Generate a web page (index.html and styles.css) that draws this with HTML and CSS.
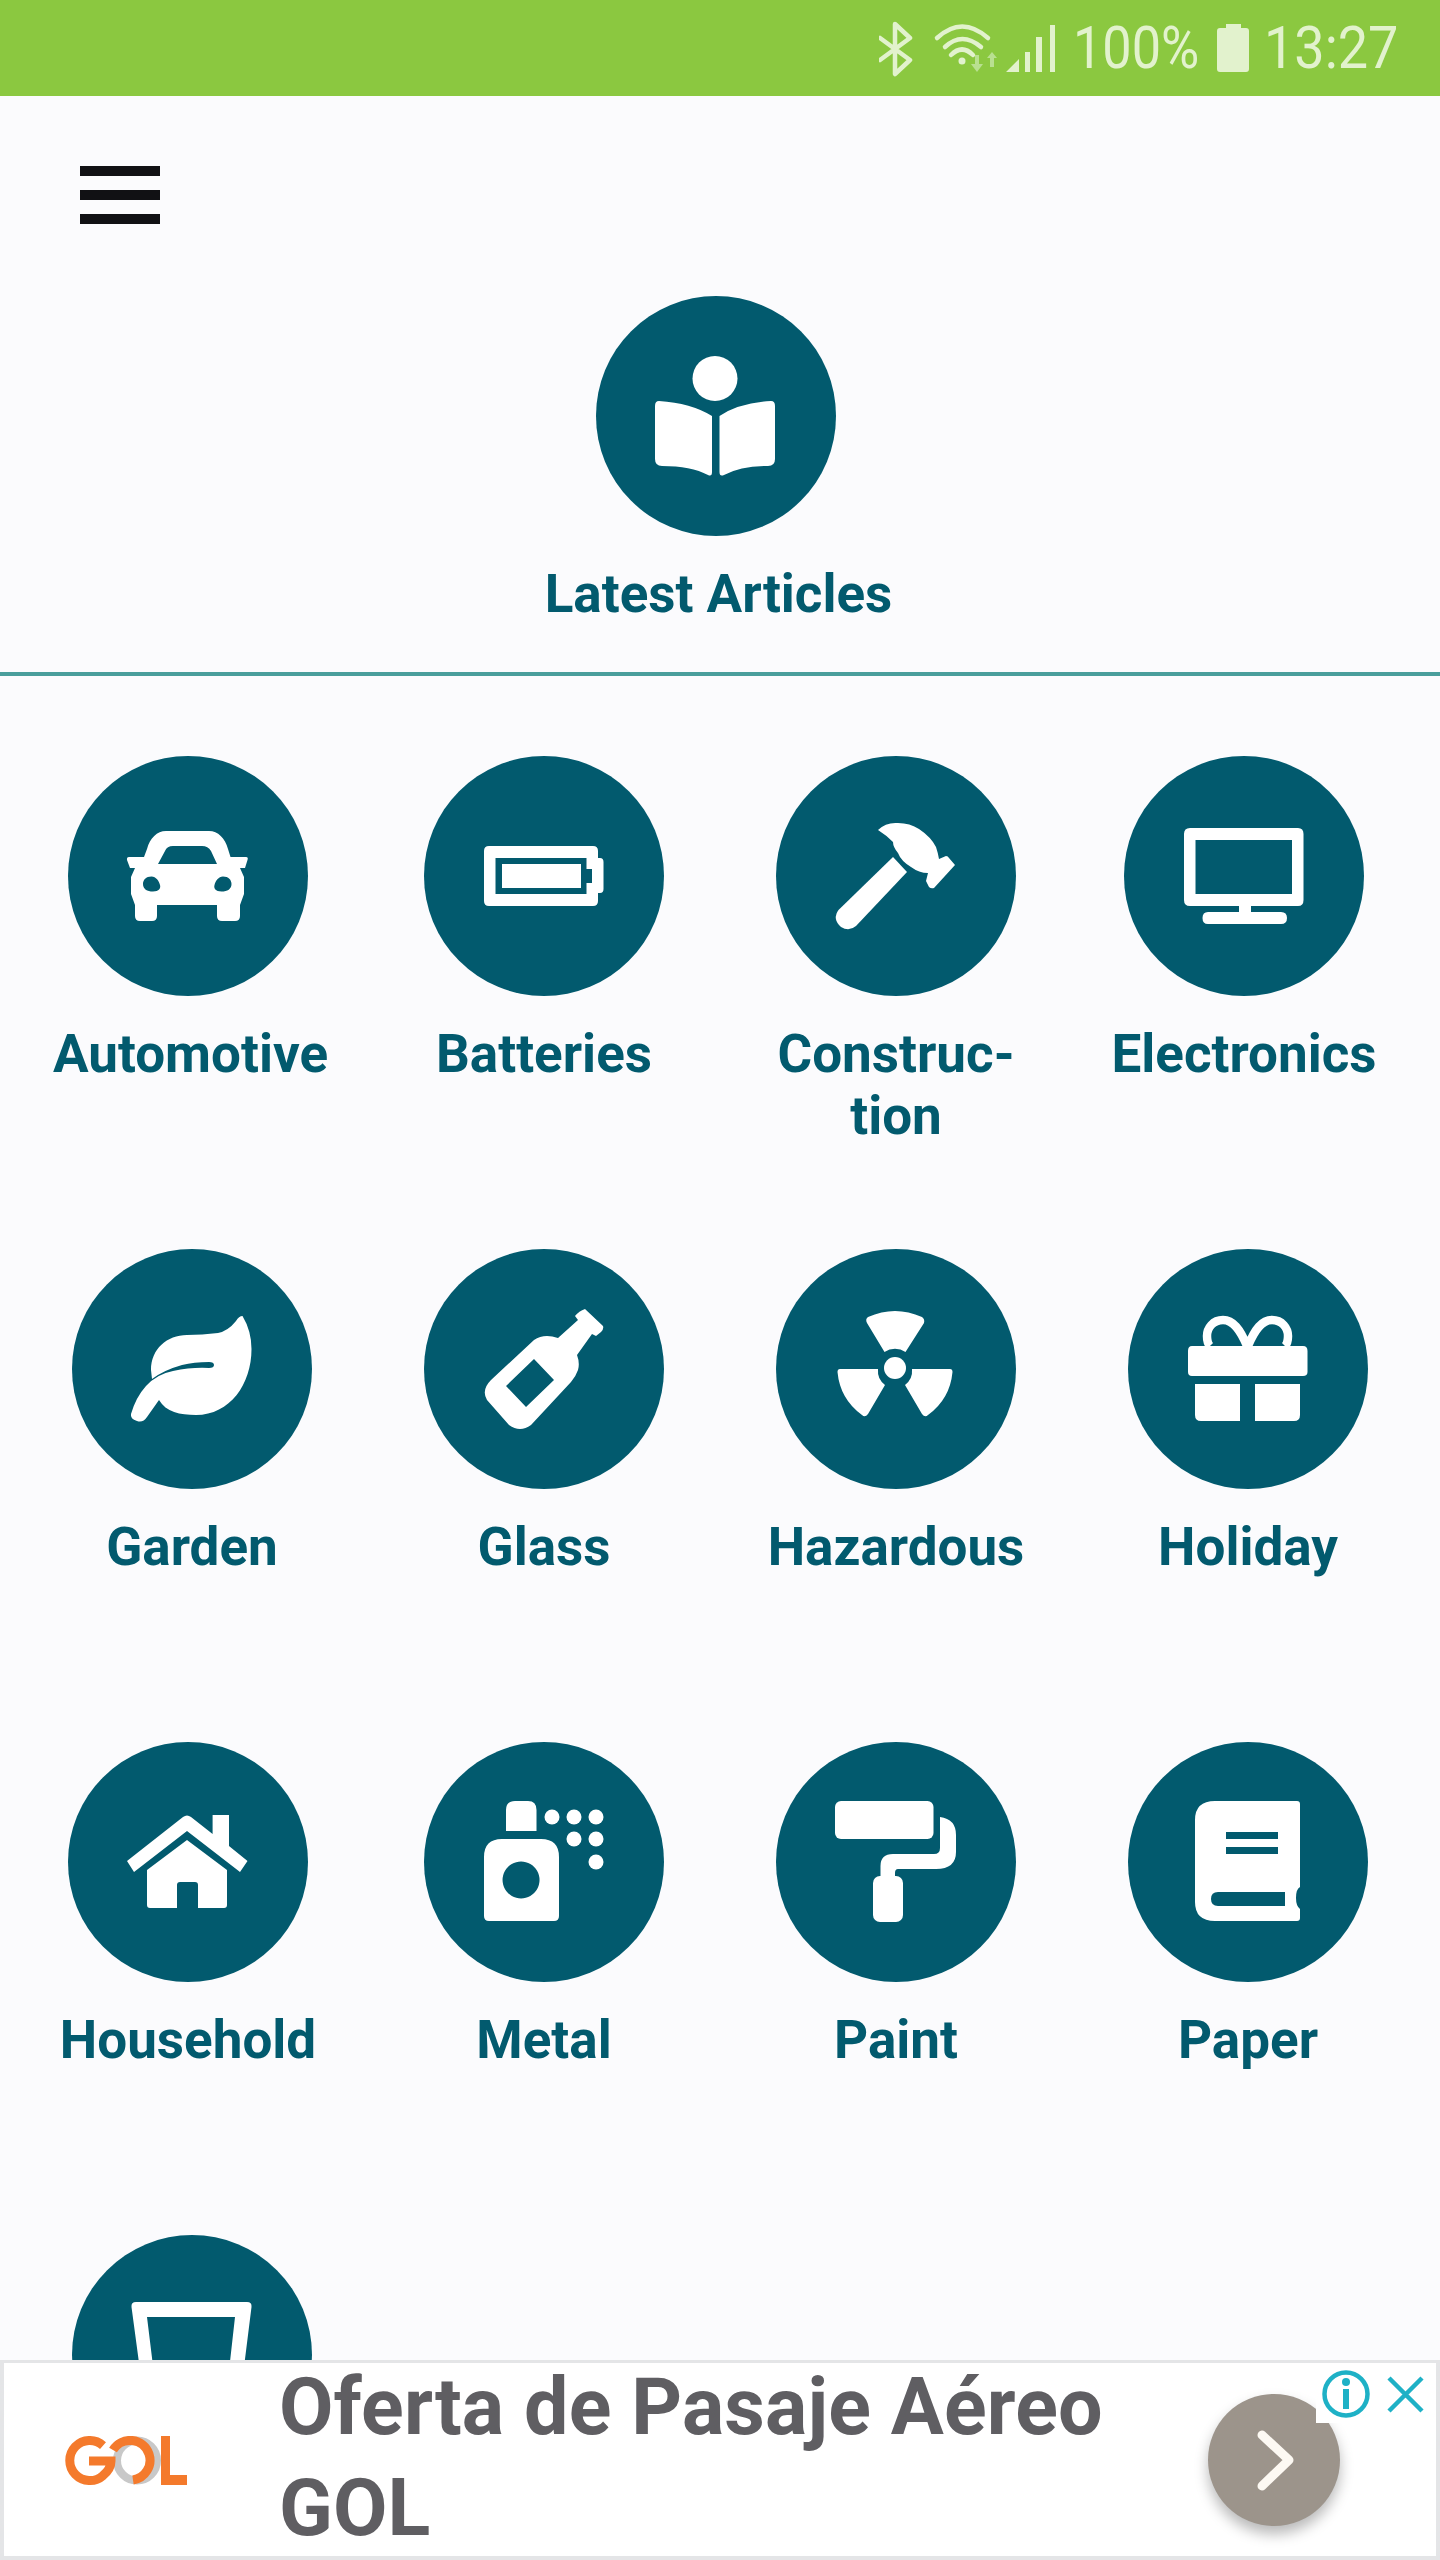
FILE: index.html
```html
<!DOCTYPE html>
<html lang="en">
<head>
<meta charset="utf-8">
<title>Latest Articles</title>
<link rel="stylesheet" href="styles.css">
</head>
<body>
<div class="screen">
  <div class="statusbar">
    <svg class="st-icons" viewBox="0 0 176 96" width="176" height="96">
      <path class="st-line" d="M1 38 L31 60 L16 74 V24 L31 38 L1 60"/>
      <path class="st-line" d="M58 38 Q83 15 109 38"/>
      <path class="st-line" d="M66 47 Q83 31 102 47"/>
      <path class="st-line" d="M72 55 Q83 44 94 55"/>
      <circle class="st-fill" cx="83" cy="61" r="3.5"/>
      <path class="st-dim" d="M96 55 h4 v9 h4 l-6 8 l-6 -8 h4 z M111 67 v-9 h-3 l5 -6 l5 6 h-3 v9 z"/>
      <path class="st-fill" d="M127 72 L140 59 V72 Z M146 52 h5 V72 h-5 Z M157 37 h6 V72 h-6 Z M171 25 h5 V72 h-5 Z"/>
    </svg>
    <span class="st-text st-pct">100%</span>
    <svg class="st-batt" viewBox="0 0 32 48" width="32" height="48"><path class="st-fill" d="M9 0 H24 V4 H29 Q32 4 32 7 V45 Q32 48 29 48 H3 Q0 48 0 45 V7 Q0 4 3 4 H9 Z"/></svg>
    <span class="st-text st-time">13:27</span>
  </div>

  <button class="menu" aria-label="Menu"><span class="menu-bar"></span><span class="menu-bar"></span><span class="menu-bar"></span></button>

  <div class="latest">
    <div class="tile">
      <svg class="disc" viewBox="0 0 240 240"><circle class="disc-bg" cx="120" cy="120" r="120"/>
        <circle class="ic" cx="119" cy="82.500" r="22.500"/>
        <path class="ic" d="M63 105 Q95 107 116 120 V176 Q116 181 112 179 Q95 170 66 170 Q59 170 59 163 V110 Q59 105 63 105 Z M175 105 Q143 107 123.500 120 V176 Q123.500 181 128 179 Q145 170 172 170 Q179 170 179 163 V110 Q179 105 175 105 Z"/>
      </svg>
      <div class="label label-shift">Latest Articles</div>
    </div>
  </div>

  <div class="rule"></div>

  <div class="grid">
    <div class="row row-a">
      <div class="tile">
        <svg class="disc" viewBox="0 0 240 240"><circle class="disc-bg" cx="120" cy="120" r="120"/>
          <path class="ic" fill-rule="evenodd" d="M98 75 H141 C150 75 157 82 160 93 L162.500 101 H178 Q180.500 101 179.500 104 L177 112 H172 L176 121 V138 L172 149 V160 Q172 165 167 165 H154 Q149 165 149 160 V149 H89 V160 Q89 165 84 165 H72 Q67 165 67 160 V149 L63 138 V121 L67 112 H62 L59 104 Q58.500 101 61 101 H76 L79 93 C82 82 89 75 98 75 Z M90 108 H149 L143 95 Q140 90 134 90 H105 Q99 90 97 95 Z M83.500 120.500 C78 120.500 75 124 75 128 C75 133 79 135.500 85 135.500 C91 135.500 93 132 92 129 C91 125 88 120.500 83.500 120.500 Z M155 120.500 C150.500 120.500 147.500 125 146.500 129 C145.500 132 147.500 135.500 153.500 135.500 C159.500 135.500 163.500 133 163.500 128 C163.500 124 160.500 120.500 155 120.500 Z"/>
        </svg>
        <div class="label label-shift">Automotive</div>
      </div>
      <div class="tile">
        <svg class="disc" viewBox="0 0 240 240"><circle class="disc-bg" cx="120" cy="120" r="120"/>
          <path class="ic" fill-rule="evenodd" d="M65 90 H169 Q174 90 174 95 V102 H176 Q179.500 102 179.500 106 V133 Q179.500 137 176 137 H174 V145 Q174 150 169 150 H65 Q60 150 60 145 V95 Q60 90 65 90 Z M71.500 102 V138 H162.500 V127 H168 V113 H162.500 V102 Z"/>
          <rect class="ic" x="78" y="108" width="79" height="24"/>
        </svg>
        <div class="label">Batteries</div>
      </div>
      <div class="tile">
        <svg class="disc" viewBox="0 0 240 240"><circle class="disc-bg" cx="120" cy="120" r="120"/>
          <path class="ic" d="M117 101 L131 116 L80 170 Q73 176 65 171 Q56 163 62.500 154 Z"/>
          <path class="ic" d="M102 74 Q110 66 122 67 Q134 67 143 73 Q155 81 160 91 Q162 97 163 103 L170 100 Q172 100 173 102 L179 109 L158 132 Q155 133 153 131 L150 125 L152 117 Q143 117 135 111 Q125 105 122 97 Q117 91 117 86 Q110 79 102 74 Z"/>
        </svg>
        <div class="label label-wrap">Construc-<br>tion</div>
      </div>
      <div class="tile">
        <svg class="disc" viewBox="0 0 240 240"><circle class="disc-bg" cx="120" cy="120" r="120"/>
          <path class="ic" fill-rule="evenodd" d="M66 72 H174 Q179.500 72 179.500 78 V144 Q179.500 150 174 150 H127 V156 H157 Q163 156 163 162 Q163 168 157 168 H84 Q78.500 168 78.500 162 Q78.500 156 84 156 H115 V150 H66 Q60 150 60 144 V78 Q60 72 66 72 Z M71.500 84 V138 H168 V84 Z"/>
        </svg>
        <div class="label">Electronics</div>
      </div>
    </div>

    <div class="row row-b">
      <div class="tile">
        <svg class="disc" viewBox="0 0 240 240"><circle class="disc-bg" cx="120" cy="120" r="120"/>
          <path class="ic" d="M170.500 67 Q179.500 82 179.500 100 C179.500 135 158 166 124 166 C108 166 94 163 87 151 L75 168 Q71 174 65 172 Q58 170 59 165 Q64 148 74 137 Q85 125 101 122 Q120 118 137 119 Q142 119 142 116 Q142 113 137 113 Q122 113 110 116 Q92 121 80 130 L79 121 C79 100 95 86 115 86 Q130 86 146 84 Q156 82 164 72 Q167 67 170.500 67 Z"/>
        </svg>
        <div class="label">Garden</div>
      </div>
      <div class="tile">
        <svg class="disc" viewBox="0 0 240 240"><circle class="disc-bg" cx="120" cy="120" r="120"/>
          <path class="ic" fill-rule="evenodd" d="M161 60 L179 77 Q180 80 177 83 L172 87 L168 85 L153 106 Q156 114 154 121 Q152 127 147 133 L107 176 Q96 184 85 176 L63 151 Q57 141 67 131 L110 91 Q120 84 134 89 L154 71 L151 67 Q155 62 161 60 Z M110 110 L82 137 L102 158 L130 131 Z"/>
        </svg>
        <div class="label">Glass</div>
      </div>
      <div class="tile">
        <svg class="disc" viewBox="0 0 240 240"><circle class="disc-bg" cx="120" cy="120" r="120"/>
          <path class="ic" d="M91 74 Q89 70 92 68 Q119 56 146 68 Q149 70 148 74 L129.500 103 A19 19 0 0 0 108.500 103 Z"/>
          <path class="ic" d="M64 120 H102 A18 18 0 0 0 109 136 L92 165 Q89 169 86 166 Q64 150 61.500 123 Q61.500 120 64 120 Z"/>
          <path class="ic" d="M174 120 H136 A18 18 0 0 1 129 136 L146 165 Q149 169 152 166 Q174 150 176.500 123 Q176.500 120 174 120 Z"/>
          <circle class="ic" cx="119" cy="119" r="11"/>
        </svg>
        <div class="label">Hazardous</div>
      </div>
      <div class="tile">
        <svg class="disc" viewBox="0 0 240 240"><circle class="disc-bg" cx="120" cy="120" r="120"/>
          <path class="bow" d="M119 97 C112 80 105 71 95 71 C85 71 79 79 79 87 C79 91 80 95 82 97 M120 97 C127 80 134 71 144 71 C154 71 160 79 160 87 C160 91 159 95 157 97"/>
          <path class="ic" d="M64 97 H175 Q179.500 97 179.500 102 V123 Q179.500 127 175 127 H64 Q60 127 60 123 V102 Q60 97 64 97 Z M67 135 H112 V172 H73 Q67 172 67 166 Z M127 135 H172 V166 Q172 172 166 172 H127 Z"/>
        </svg>
        <div class="label">Holiday</div>
      </div>
    </div>

    <div class="row row-c">
      <div class="tile">
        <svg class="disc" viewBox="0 0 240 240"><circle class="disc-bg" cx="120" cy="120" r="120"/>
          <path class="ic" d="M115 75 Q119 72 123 75 L144.600 92 V73 H161 V104 L179.500 119 L172 130 L119 89 L66 130 L59 119 Z"/>
          <path class="ic" d="M119 98 L159 128 V163 Q159 166 156 166 H130 V143 Q130 140 127 140 H112 Q109 140 109 143 V166 H82 Q79 166 79 163 V128 Z"/>
        </svg>
        <div class="label">Household</div>
      </div>
      <div class="tile">
        <svg class="disc" viewBox="0 0 240 240"><circle class="disc-bg" cx="120" cy="120" r="120"/>
          <path class="ic" fill-rule="evenodd" d="M82 68 Q82 59 91 59 H104 Q112.500 59 112.500 68 V89 H82 Z M78 97 H117 Q135 97 135 115 V174 Q135 179 130 179 H65 Q60 179 60 174 V115 Q60 97 78 97 Z M97 119.500 A18.500 18.500 0 1 0 97.100 119.500 Z"/>
          <g class="ic"><circle cx="128" cy="75" r="7.500"/><circle cx="150" cy="75" r="7.500"/><circle cx="172" cy="75" r="7.500"/><circle cx="150" cy="97" r="7.500"/><circle cx="172" cy="97" r="7.500"/><circle cx="172" cy="120" r="7.500"/></g>
        </svg>
        <div class="label">Metal</div>
      </div>
      <div class="tile">
        <svg class="disc" viewBox="0 0 240 240"><circle class="disc-bg" cx="120" cy="120" r="120"/>
          <rect class="ic" x="59" y="59" width="98.500" height="38" rx="6"/>
          <path class="ic" d="M164 75 Q180 77 180 93 V110 Q180 127 160 127 H122 Q119 127 119 131 V136 H104.500 V124 Q104.500 112 117 112 H158 Q164 112 164 106 Z"/>
          <rect class="ic" x="97" y="134" width="30" height="46" rx="7"/>
        </svg>
        <div class="label">Paint</div>
      </div>
      <div class="tile">
        <svg class="disc" viewBox="0 0 240 240"><circle class="disc-bg" cx="120" cy="120" r="120"/>
          <path class="ic" fill-rule="evenodd" d="M87 59 H169 Q172 59 172 62 V145 Q168 147 168 156 Q168 164 172 167 V176 Q172 179 169 179 H87 Q67 179 67 160 V78 Q67 59 87 59 Z M98 90 V97 H150 V90 Z M98 105 V112 H150 V105 Z M90 150 Q83 150 83 157 Q83 164 90 164 H157 V150 Z"/>
        </svg>
        <div class="label">Paper</div>
      </div>
    </div>

    <div class="row row-b">
      <div class="tile">
        <svg class="disc" viewBox="0 0 240 240"><circle class="disc-bg" cx="120" cy="120" r="120"/>
          <path class="ic" fill-rule="evenodd" d="M64 67 H175 Q180 67 179.500 72 L166 180 H74 L59.500 72 Q59 67 64 67 Z M75 82 L87 180 H152 L163 82 Z"/>
        </svg>
      </div>
    </div>
  </div>

  <aside class="ad">
    <svg class="gol" viewBox="0 0 122 49" width="122" height="49">
      <circle class="gol-gray" cx="72" cy="24.500" r="20"/>
      <path class="gol-or" d="M38 9.500 A20 20 0 1 0 38 39.500 Q46 33 46 25 H24"/>
      <path class="gol-or" d="M48 14 A20 20 0 0 1 84 18 A20 20 0 0 1 68 44"/>
      <path class="gol-l" d="M96 0 H105 V39 H122 V49 H96 Z"/>
    </svg>
    <div class="ad-title">Oferta de Pasaje Aéreo<br>GOL</div>
    <div class="ad-next">
      <svg viewBox="0 0 132 132" width="132" height="132"><path class="chev" d="M54 41 L81 66 L54 92"/></svg>
    </div>
    <div class="adchoice">
      <svg viewBox="0 0 120 60" width="120" height="60">
        <circle class="ac-line" cx="30" cy="31" r="21.500"/>
        <circle class="ac-dot" cx="30" cy="19" r="4"/>
        <rect class="ac-dot" x="27" y="26" width="6" height="20"/>
        <path class="ac-line" d="M73 15 L106 48 M106 15 L73 48"/>
      </svg>
    </div>
  </aside>
</div>
</body>
</html>
```
FILE: styles.css
```css
* { box-sizing: border-box; }
html, body { margin: 0; padding: 0; }
body { width: 1440px; height: 2560px; overflow: hidden; background: #fbfbfd; font-family: Roboto, "Liberation Sans", sans-serif; }
.screen { position: relative; width: 1440px; height: 2560px; overflow: hidden; background: #fbfbfd; }

.statusbar { height: 96px; background: #8bc840; display: flex; align-items: center; justify-content: flex-end; padding-right: 44px; color: #e2f2cd; }
.st-icons { flex: none; margin-right: 18px; }
.st-line { fill: none; stroke: #e2f2cd; stroke-width: 4.5; stroke-linecap: round; stroke-linejoin: round; }
.st-fill { fill: #e2f2cd; }
.st-dim { fill: #b9e090; }
.st-text { display: block; font-size: 60px; font-weight: 400; line-height: 96px; white-space: nowrap; transform-origin: left center; }
.st-pct { width: 126px; transform: scaleX(.87); }
.st-time { width: 132px; transform: scaleX(.9); }
.st-batt { flex: none; margin: 0 15px 0 18px; }

.menu { display: flex; flex-direction: column; gap: 14px; width: 80px; margin: 70px 0 0 80px; padding: 0; border: 0; background: none; }
.menu-bar { display: block; height: 10px; background: #111114; }

.latest { display: flex; justify-content: center; margin-top: 72px; padding-right: 8px; }
.rule { height: 4px; margin-top: 47px; background: #4a9e9c; }

.grid { padding-top: 80px; }
.row { display: grid; height: 493px; }
.row-a { grid-template-columns: 376px 336px 368px 328px; }
.row-b { grid-template-columns: 384px 320px 384px 320px; }
.row-c { grid-template-columns: 376px 336px 368px 336px; }

.tile { display: flex; flex-direction: column; align-items: center; }
.disc { display: block; flex: none; width: 240px; height: 240px; }
.disc-bg { fill: #025a6e; }
.ic { fill: #fff; }
.bow { fill: none; stroke: #fff; stroke-width: 8.500; }
.label { margin-top: 27px; font-size: 53px; font-weight: 700; line-height: 62px; color: #025a6e; text-align: center; white-space: nowrap; }
.label-shift { margin-left: 5px; }

.ad { position: absolute; left: 0; right: 0; bottom: 0; height: 200px; display: flex; align-items: flex-start; background: #fff; border: 4px solid #e4e5e7; border-top-width: 3px; }
.gol { flex: none; margin: 73px 0 0 61px; }
.gol-gray { fill: none; stroke: #c8c8c8; stroke-width: 8; }
.gol-or { fill: none; stroke: #f47a2c; stroke-width: 9; }
.gol-l { fill: #f47a2c; }
.ad-title { flex: 1; margin: -6px 0 0 92px; font-size: 79px; font-weight: 700; line-height: 101px; letter-spacing: .15px; color: #5f5e62; white-space: nowrap; }
.ad-next { flex: none; width: 132px; height: 132px; margin: 31px 96px 0 0; border-radius: 50%; background: #9c948b; box-shadow: 0 8px 14px rgba(0,0,0,.28); }
.ad-next svg { display: block; }
.chev { fill: none; stroke: #fdf9f3; stroke-width: 9; stroke-linecap: round; stroke-linejoin: round; }
.adchoice { position: absolute; top: 0; right: 0; width: 120px; height: 60px; background: #fff; }
.adchoice svg { display: block; }
.ac-line { fill: none; stroke: #1eb1c6; stroke-width: 4.500; }
.ac-dot { fill: #1eb1c6; }
```
